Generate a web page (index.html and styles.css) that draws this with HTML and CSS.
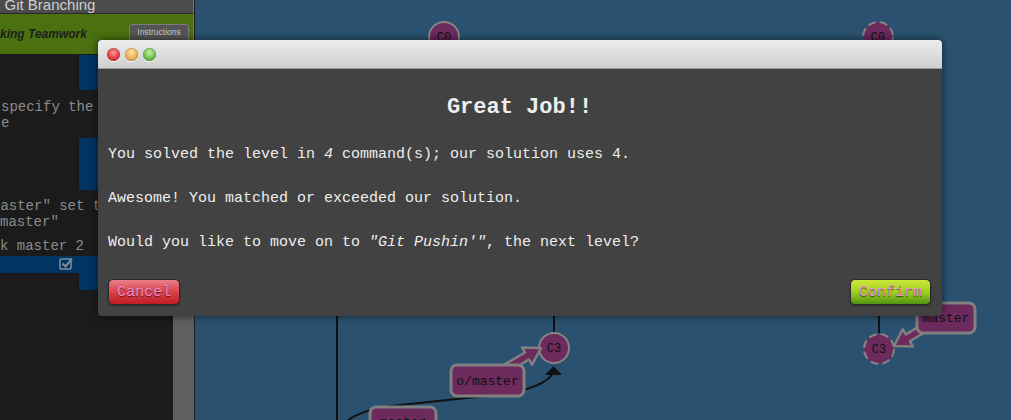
FILE: index.html
```html
<!DOCTYPE html>
<html>
<head>
<meta charset="utf-8">
<title>Learn Git Branching</title>
<link rel="stylesheet" href="styles.css">
</head>
<body>
<div class="app">
  <aside class="sidebar">
    <div class="header"><span class="header-title">Learn Git Branching</span></div>
    <div class="levelbar">
      <span class="level-name">Faking Teamwork</span>
      <button class="instr">Instructions</button>
    </div>
    <div class="term-wrap">
      <div class="terminal">
        <div class="blk blk1"></div>
        <div class="tlines t1">
          <div class="ln">specify the remote</div>
          <div class="ln">e</div>
        </div>
        <div class="blk blk2"></div>
        <div class="tlines t2">
          <div class="ln shift">master" set to</div>
          <div class="ln">master"</div>
          <div class="ln gap">k master 2</div>
        </div>
        <div class="donebar">
          <svg class="check" width="15" height="13" viewBox="0 0 15 13">
            <rect x="1" y="2" width="11" height="10" rx="1" fill="none" stroke="#7f8c99" stroke-width="1.6"/>
            <path d="M3.5 6.5 L6.5 9.5 L13 1.5" fill="none" stroke="#7f8c99" stroke-width="2"/>
          </svg>
        </div>
        <div class="blk blk3"></div>
      </div>
      <div class="scroll"></div>
    </div>
  </aside>
  <main class="canvas">
    <svg class="graph" viewBox="195 0 816 420" width="816" height="420">
      <g stroke="#111" stroke-width="2" fill="none">
        <line x1="337" y1="40" x2="337" y2="420"/>
        <line x1="554" y1="300" x2="554" y2="333"/>
        <line x1="879" y1="300" x2="879" y2="333"/>
        <path d="M347 421 Q362 409 400 405 L505 394 Q545 387 553 373"/>
      </g>
      <polygon points="545,375 562,375 553.5,366" fill="#111"/>

      <circle cx="444" cy="37" r="15" fill="#6c2a5d" stroke="#858585" stroke-width="2"/>
      <text class="nid" x="444" y="41">C0</text>
      <circle cx="878" cy="37" r="15" fill="#6c2a5d" stroke="#858585" stroke-width="2" stroke-dasharray="8 4"/>
      <text class="nid" x="878" y="41">C0</text>

      <circle cx="554" cy="348" r="15" fill="#6c2a5d" stroke="#858585" stroke-width="2"/>
      <text class="nid" x="554" y="352">C3</text>
      <circle cx="879" cy="349" r="15" fill="#6c2a5d" stroke="#858585" stroke-width="2" stroke-dasharray="8 4"/>
      <text class="nid" x="879" y="353">C3</text>

      <polygon points="500,367 525,352.5 522,347.4 541,348 532,364.7 529,359.5 504,374" fill="#6c2a5d" stroke="#808080" stroke-width="2.5" stroke-linejoin="round"/>
      <rect x="451" y="365" width="73" height="31" rx="6" fill="#6c2a5d" stroke="#808080" stroke-width="3"/>
      <text class="lbl" x="487.5" y="385">o/master</text>

      <polygon points="930.7,319.6 905.8,334.4 902.7,329.2 894,346 912.9,346.4 909.8,341.2 934.7,326.4" fill="#6c2a5d" stroke="#808080" stroke-width="2.5" stroke-linejoin="round"/>
      <rect x="917" y="303" width="58" height="30" rx="6" fill="#6c2a5d" stroke="#808080" stroke-width="3"/>
      <text class="lbl" x="946" y="322">master</text>

      <rect x="370" y="407" width="66" height="30" rx="6" fill="#6c2a5d" stroke="#808080" stroke-width="3"/>
      <text class="lbl" x="403" y="426">master</text>
    </svg>
  </main>
</div>

<div class="modal">
  <div class="titlebar">
    <span class="light red"></span>
    <span class="light yellow"></span>
    <span class="light green"></span>
  </div>
  <div class="mbody">
    <h2 class="mtitle">Great Job!!</h2>
    <p class="mp first">You solved the level in <em>4</em> command(s); our solution uses 4.</p>
    <p class="mp">Awesome! You matched or exceeded our solution.</p>
    <p class="mp">Would you like to move on to <em>"Git Pushin'"</em>, the next level?</p>
    <div class="actions">
      <button class="btn cancel">Cancel</button>
      <button class="btn confirm">Confirm</button>
    </div>
  </div>
</div>
</body>
</html>
```

FILE: styles.css
```css
* { box-sizing: border-box; }
html, body { margin: 0; height: 100%; }
body {
  background: #2a5270;
  overflow: hidden;
  font-family: "Liberation Sans", Arial, sans-serif;
}
.app { display: flex; height: 420px; }

/* sidebar */
.sidebar {
  width: 195px;
  display: flex;
  flex-direction: column;
  background: #1b1b1b;
  border-right: 1px solid #1d1d1d;
}
.header {
  height: 14px;
  background: #4b4b4b;
  border-bottom: 1px solid #2a2a2a;
  border-right: 1px solid #7a7a7a;
  overflow: hidden;
}
.header-title {
  display: block;
  margin-top: -3px;
  margin-left: -38px;
  font-size: 15px;
  line-height: 15px;
  color: #d0d0d0;
  white-space: nowrap;
}
.levelbar {
  height: 40px;
  background: #4a700f;
  border-right: 1px solid #7a7a7a;
  display: flex;
  align-items: center;
  justify-content: space-between;
  padding-right: 4px;
  overflow: hidden;
}
.level-name {
  margin-left: -14px;
  font-size: 12px;
  font-weight: bold;
  font-style: italic;
  color: #1e1e1e;
  white-space: nowrap;
}
.instr {
  width: 60px;
  height: 17px;
  padding: 0;
  background: #555;
  border: 1px solid #7c7c7c;
  border-radius: 3px;
  color: #c8c8c8;
  font-family: "Liberation Sans", Arial, sans-serif;
  font-size: 8.5px;
  margin-top: -4px;
}
.term-wrap { flex: 1; display: flex; }
.terminal {
  width: 173px;
  background: #1b1b1b;
  overflow: hidden;
  font-family: "Liberation Mono", "Courier New", monospace;
  font-size: 14px;
  color: #8c8c8c;
}
.scroll { flex: 1; background: #5f5f5f; }
.blk { margin-left: 79px; background: #003463; }
.blk1 { margin-top: 1px; height: 35px; }
.blk2 { margin-top: 7px; height: 52px; }
.blk3 { height: 17px; }
.tlines { line-height: 16px; white-space: nowrap; }
.t1 { margin-top: 9px; padding-left: 1px; }
.t2 { margin-top: 8px; }
.ln.shift { margin-left: -8px; }
.ln.gap { margin-top: 8px; }
.donebar {
  margin-top: 2px;
  height: 17px;
  background: #003463;
  padding-left: 59px;
  padding-top: 1px;
}
.check { display: block; }

/* canvas */
.canvas { flex: 1; overflow: hidden; }
.graph { display: block; }
.nid {
  font-family: "Liberation Mono", "Courier New", monospace;
  font-size: 12px;
  text-anchor: middle;
  fill: #111;
}
.lbl {
  font-family: "Liberation Mono", "Courier New", monospace;
  font-size: 13px;
  text-anchor: middle;
  fill: #111;
}

/* modal */
.modal {
  position: absolute;
  left: 98px;
  top: 40px;
  width: 844px;
  height: 276px;
  border-radius: 4px;
  background: #424242;
  box-shadow: 0 0 8px rgba(0, 0, 0, 0.6);
  overflow: hidden;
  display: flex;
  flex-direction: column;
}
.titlebar {
  height: 29px;
  background: linear-gradient(#ededed, #cfcfcf);
  border-bottom: 1px solid #9a9a9a;
  display: flex;
  align-items: center;
  gap: 5px;
  padding-left: 9px;
  padding-top: 1px;
}
.light {
  width: 13px;
  height: 13px;
  border-radius: 50%;
  box-shadow: 0 1px 1px rgba(255, 255, 255, 0.9), inset 0 0 1px rgba(0, 0, 0, 0.6);
}
.red { background: radial-gradient(circle at 50% 35%, #ff9a9a, #e23a44 55%, #b8222a); }
.yellow { background: radial-gradient(circle at 50% 35%, #ffe0a0, #eeae55 55%, #c98a30); }
.green { background: radial-gradient(circle at 50% 35%, #c8f0a8, #6cc04c 55%, #3f9a2c); }
.mbody {
  flex: 1;
  display: flex;
  flex-direction: column;
  padding: 24px 11px 11px 10px;
  color: #eeeeee;
  font-family: "Liberation Mono", "Courier New", monospace;
  font-size: 15px;
}
.mtitle {
  margin: 0;
  text-align: center;
  font-size: 22px;
  line-height: 30px;
  font-weight: bold;
}
.mp { margin: 26px 0 0; line-height: 18px; }
.mp.first { margin-top: 23px; }
.actions {
  margin-top: 27px;
  display: flex;
  justify-content: space-between;
}
.btn {
  height: 26px;
  padding: 0 8px;
  border: 1px solid #2a2a2a;
  border-radius: 5px;
  font-family: "Liberation Mono", "Courier New", monospace;
  font-size: 15px;
  text-shadow: 0 1px 1px rgba(0, 0, 0, 0.6);
  box-shadow: 0 1px 2px rgba(0, 0, 0, 0.4);
}
.cancel {
  color: #f58cc8;
  background: linear-gradient(#e97f88, #d8424b 50%, #c21c24);
}
.confirm {
  color: #ea8fd8;
  background: linear-gradient(#cde83c, #a2cf1f 50%, #4f9513);
}
```
